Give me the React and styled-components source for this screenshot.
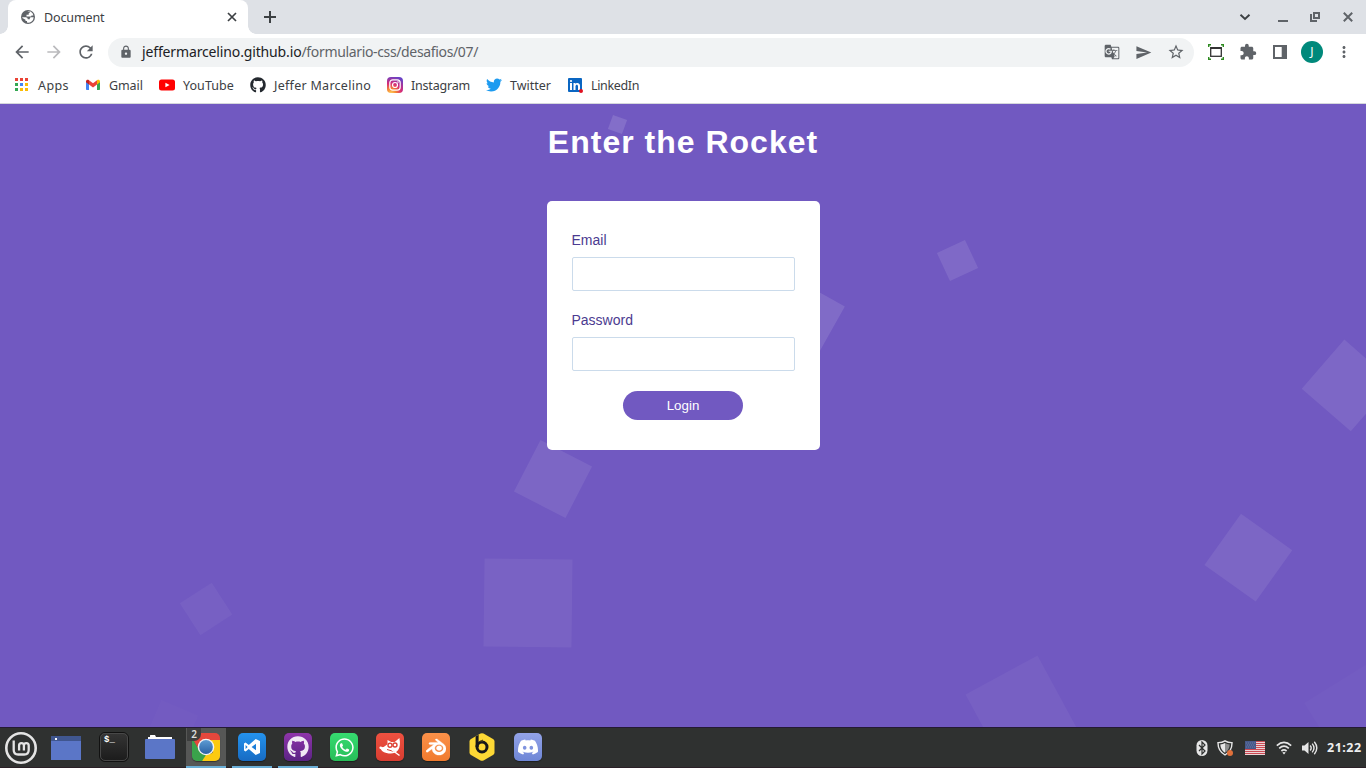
import React from "react";
import styled, { createGlobalStyle } from "styled-components";
import { MdArrowBack, MdArrowForward, MdRefresh, MdLock, MdStarBorder, MdSend, MdExtension, MdMoreVert, MdGTranslate } from "react-icons/md";
import { FaGithub, FaTwitter, FaWhatsapp } from "react-icons/fa";
import { SiBlender, SiDiscord } from "react-icons/si";

const GlobalStyle = createGlobalStyle`
  * { box-sizing: border-box; }
  body { margin: 0; overflow: hidden; background: #7159c1; }
  svg { display: block; flex: none; }
`;

const uiFont = `"Noto Sans", "Open Sans", sans-serif`;

const Desktop = styled.div`
  width: 1366px;
  height: 768px;
  display: flex;
  flex-direction: column;
  overflow: hidden;
  font-family: ${uiFont};
`;

/* Browser chrome */
const TabStrip = styled.header`
  height: 34px;
  flex: none;
  display: flex;
  background: #dee1e6;
  padding-left: 8px;
  color: #3c4043;
`;
const Tab = styled.div`
  width: 240px;
  height: 34px;
  display: flex;
  align-items: center;
  background: #fff;
  border-radius: 8px 8px 0 0;
  padding: 0 9px 0 13px;
  font-size: 12.5px;
  letter-spacing: -0.12px;
  position: relative;
  &::before, &::after {
    content: "";
    position: absolute;
    bottom: 0;
    width: 8px;
    height: 8px;
  }
  &::before { left: -8px; background: radial-gradient(circle at 0 0, transparent 7.5px, #fff 8px); }
  &::after { right: -8px; background: radial-gradient(circle at 100% 0, transparent 7.5px, #fff 8px); }
`;
const TabTitle = styled.span`
  flex: 1;
  padding-left: 9px;
`;
const NewTab = styled.div`
  display: flex;
  align-items: center;
  padding-left: 12px;
`;
const WindowButtons = styled.div`
  margin-left: auto;
  display: flex;
  align-items: center;
  gap: 22px;
  padding-right: 11px;
`;
const Toolbar = styled.div`
  height: 37px;
  flex: none;
  display: flex;
  align-items: center;
  background: #fff;
  color: #5f6368;
  padding: 0 11px 3px 12px;
`;
const NavButtons = styled.div`
  display: flex;
  gap: 12px;
  width: 96px;
  padding-top: 2px;
`;
const Omnibox = styled.div`
  width: 1086px;
  height: 29px;
  margin-top: 3px;
  border-radius: 15px;
  background: #f1f3f4;
  display: flex;
  align-items: center;
  padding: 0 9px 1px 11px;
`;
const Url = styled.span`
  flex: 1;
  padding-left: 9px;
  font-size: 14px;
  letter-spacing: -0.35px;
  line-height: 20px;
  color: #5f6368;
  b { color: #202124; font-weight: 400; letter-spacing: -0.14px; }
`;
const OmniboxActions = styled.div`
  display: flex;
  align-items: center;
  gap: 15px;
`;
const Extensions = styled.div`
  display: flex;
  align-items: center;
  gap: 15px;
  padding: 2px 0 0 14px;
`;
const Avatar = styled.span`
  width: 22px;
  height: 22px;
  margin: 0 -3px 0 -2px;
  border-radius: 50%;
  background: #00897b;
  color: #fff;
  font-size: 12px;
  line-height: 22px;
  text-align: center;
`;
const Bookmarks = styled.nav`
  height: 33px;
  flex: none;
  display: flex;
  background: #fff;
  border-bottom: 1px solid #d5d7db;
  padding: 0 0 4px 13px;
  color: #3c4043;
  font-size: 12.5px;
`;
const Bookmark = styled.span`
  width: ${(p) => p.$width}px;
  display: flex;
  align-items: center;
  gap: 8px;
  white-space: nowrap;
  letter-spacing: ${(p) => p.$spacing || 0}px;
`;

/* Page */
const Page = styled.main`
  flex: 1;
  position: relative;
  overflow: hidden;
  background: #7159c1;
  display: flex;
  flex-direction: column;
  align-items: center;
  font-family: "Liberation Sans", Arial, sans-serif;
`;
const Square = styled.i`
  position: absolute;
  left: ${(p) => p.$x - p.$size / 2}px;
  top: ${(p) => p.$y - p.$size / 2}px;
  width: ${(p) => p.$size}px;
  height: ${(p) => p.$size}px;
  transform: rotate(${(p) => p.$angle}deg);
  background: rgba(255, 255, 255, ${(p) => p.$alpha});
`;
const Title = styled.h1`
  margin: 20px 0 0;
  height: 77px;
  font-size: 32px;
  line-height: 37px;
  letter-spacing: 1px;
  color: #fff;
  z-index: 1;
`;
const Card = styled.form`
  width: 273px;
  height: 249px;
  padding: 30px 25px;
  border-radius: 5px;
  background: #fff;
  display: flex;
  flex-direction: column;
  z-index: 1;
`;
const Field = styled.label`
  display: flex;
  flex-direction: column;
  gap: 8px;
  height: 80px;
  font-size: 14px;
  line-height: 18px;
  color: #4b3b90;
`;
const Input = styled.input`
  height: 34px;
  width: 223px;
  border: 1px solid #cbdbeb;
  border-radius: 2px;
  background: #fff;
  padding: 0 8px;
`;
const LoginButton = styled.button`
  width: 120px;
  height: 29px;
  align-self: center;
  border: 0;
  border-radius: 15px;
  padding: 0;
  background: #7159c1;
  color: #fff;
  font: 13.33px "Liberation Sans", Arial, sans-serif;
`;

/* Desktop panel */
const Panel = styled.footer`
  height: 41px;
  flex: none;
  display: flex;
  background: #2f3130;
  border-top: 1px solid #241a35;
  border-bottom: 1px solid #2b2027;
`;
const MenuButton = styled.div`
  width: 46px;
  padding: 4px 0 0 5px;
`;
const Launcher = styled.div`
  width: 48px;
  padding: 8px 0 0 5px;
`;
const Apps = styled.div`
  display: flex;
  gap: 6px;
`;
const AppSlot = styled.div`
  width: 40px;
  height: 40px;
  display: flex;
  justify-content: center;
  align-items: center;
  position: relative;
  background: ${(p) => (p.$active ? "#565756" : "transparent")};
  border-bottom: 2px solid ${(p) => (p.$open ? "#6aaed6" : "transparent")};
`;
const Tile = styled.span`
  width: 28px;
  height: 28px;
  border-radius: 5px;
  display: flex;
  align-items: center;
  justify-content: center;
  overflow: hidden;
  color: #fff;
  background: ${(p) => p.$bg};
  box-shadow: 0 1px 1px rgba(0, 0, 0, 0.4);
`;
const Count = styled.span`
  position: absolute;
  left: 1px;
  top: 0;
  width: 14px;
  height: 13px;
  border-radius: 0 0 7px 0;
  background: #3d3e3e;
  color: #ddd;
  font-size: 10px;
  font-weight: 600;
  line-height: 13px;
  text-align: center;
`;
const Tray = styled.div`
  margin-left: auto;
  display: flex;
  align-items: center;
  padding-right: 4px;
  color: #e6e6e6;
`;
const TrayItem = styled.span`
  width: ${(p) => p.$width}px;
`;
const Clock = styled.span`
  font-size: 12.5px;
  font-weight: 700;
  color: #eee;
  width: 35px;
  white-space: nowrap;
  letter-spacing: 0.5px;
`;

const squares = [
  [617.5, 20.5, 15, 20, 0.13],
  [957.5, 156.5, 31, -25, 0.1],
  [803.6, 214.3, 60, 29.3, 0.11],
  [1347.8, 281.2, 65.2, 41, 0.085],
  [1248.5, 453.5, 62.6, 35.5, 0.08],
  [1020.6, 607.2, 82, -28.4, 0.045],
  [1373, 614.5, 100, -32, 0.02],
  [552.7, 374.5, 58, 27.3, 0.08],
  [528, 498.5, 88, 0.7, 0.06],
  [205.8, 505, 37.7, -32.8, 0.045],
  [171.6, 622, 40, 23, 0.014],
];

const GlobeIcon = () => (
  <svg width="14" height="14" viewBox="0 0 14 14">
    <circle cx="7" cy="7" r="7" fill="#5f6368" />
    <path d="M1.300 7.200h3.500q2 .1 2 2h2v-1q0-1 1.500-1h2.400A5.700 5.700 0 0 1 6 12.600v-1.500H4.500V9.700L1.400 8zM6.200 1.400h2.500v1q0 .8-1 .8v1.600H5.500v1.600h4q1 0 1-.9h1.900q-.2-2.500-2.900-4-1.800-.8-3.300-.1z" fill="#fff" />
  </svg>
);
const AppsIcon = () => (
  <svg width="17" height="16" viewBox="0 0 17 16">
    {["#ea4335", "#ea4335", "#ea4335", "#34a853", "#4285f4", "#fbbc05", "#34a853", "#fbbc05", "#fbbc05"].map((c, i) => (
      <rect key={i} x={2 + (i % 3) * 5} y={1 + Math.floor(i / 3) * 5} width="3" height="3" fill={c} />
    ))}
  </svg>
);
const GmailIcon = () => (
  <svg width="16" height="16" viewBox="0 0 16 16">
    <path d="M1 4v8.200c0 .5.3.8.8.8H4V6.500z" fill="#4285f4" />
    <path d="M15 4v8.200c0 .5-.3.8-.8.8H12V6.500z" fill="#34a853" />
    <path d="M4 3.200 8 6.300l4-3.100v4.300l-4 3-4-3z" fill="#ea4335" />
    <path d="M1 4.500C1 2.800 2.700 2.200 4 3.200v4.300L1 5.300z" fill="#c5221f" />
    <path d="M15 4.500c0-1.700-1.700-2.300-3-1.300v4.300l3-2.200z" fill="#fbbc04" />
  </svg>
);
const YouTubeIcon = () => (
  <svg width="16" height="16" viewBox="0 0 16 16">
    <rect y="2.500" width="16" height="11" rx="2.500" fill="#f00" />
    <path d="m6.400 5.700 4.200 2.300-4.200 2.300z" fill="#fff" />
  </svg>
);
const InstagramIcon = () => (
  <svg width="16" height="16" viewBox="0 0 16 16">
    <defs>
      <radialGradient id="insta" cx=".25" cy="1.05" r="1.1">
        <stop offset="0" stopColor="#fed85b" />
        <stop offset=".3" stopColor="#f58334" />
        <stop offset=".6" stopColor="#d62a78" />
        <stop offset="1" stopColor="#6a42c5" />
      </radialGradient>
    </defs>
    <rect width="16" height="16" rx="4" fill="url(#insta)" />
    <rect x="2.800" y="2.800" width="10.400" height="10.400" rx="3" fill="none" stroke="#fff" strokeWidth="1.200" />
    <circle cx="8" cy="8" r="2.500" fill="none" stroke="#fff" strokeWidth="1.200" />
    <circle cx="11" cy="5" r=".8" fill="#fff" />
  </svg>
);
const LinkedInIcon = () => (
  <svg width="16" height="16" viewBox="0 0 16 16">
    <rect x="1" y="1" width="14" height="14" rx="1" fill="#0a66c2" />
    <path d="M3 6h2v7H3zM6.500 6h1.900v1c.9-1.700 4.600-1.600 4.600 1.800V13h-2V9.300c0-2.300-2.500-2-2.500 0V13h-2z" fill="#fff" />
    <circle cx="4" cy="4" r="1.100" fill="#fff" />
    <circle cx="14" cy="14" r="2" fill="#e01020" />
  </svg>
);
const CaptureIcon = () => (
  <svg width="16" height="16" viewBox="0 0 16 16">
    <path d="M.7 3V.8H3M13 .8h2.300V3M.7 13v2.200H3M13 15.200h2.300V13" fill="none" stroke="#2e8b20" strokeWidth="1.400" />
    <rect x="2.700" y="3.700" width="10.600" height="8.600" fill="#fff" stroke="#333" strokeWidth="1.300" />
    <path d="M2.500 4h11" stroke="#333" strokeWidth="2" />
  </svg>
);
const SidePanelIcon = () => (
  <svg width="16" height="16" viewBox="0 0 16 16">
    <rect x="1" y="1" width="14" height="14" fill="#5f6368" />
    <rect x="3" y="3" width="6.700" height="10" fill="#fff" />
  </svg>
);
const MintIcon = () => (
  <svg width="32" height="32" viewBox="0 0 32 32" fill="none" stroke="#e4e4e4">
    <circle cx="16" cy="16" r="14.700" strokeWidth="2.600" />
    <path d="M8.700 8.500V18q0 4.500 4.500 4.500h6q4.500 0 4.500-4.500v-4.500a2.400 2.400 0 0 0-4.800 0v5m0-5a2.400 2.400 0 0 0-4.800 0v5" strokeWidth="2.300" />
  </svg>
);
const FolderIcon = () => (
  <svg width="30" height="26" viewBox="0 0 30 26">
    <path d="M3 7V3h2V1.500Q5 1 5.500 1H10l1 2h16v4z" fill="#fff" />
    <path d="M1 5h28q1 0 1 1v18q0 1-1 1H1q-1 0-1-1V6q0-1 1-1z" fill="#5b76c7" />
  </svg>
);
const WindowIcon = () => (
  <svg width="30" height="24" viewBox="0 0 30 24">
    <rect width="30" height="24" fill="#5b76c7" />
    <rect width="30" height="5" fill="#40568f" />
    <rect x="4" y="2" width="2" height="2" fill="#fff" />
  </svg>
);
const TerminalTile = styled.span`
  width: 30px;
  height: 30px;
  border: 1px solid #111;
  outline: 1px solid #484848;
  outline-offset: -2px;
  border-radius: 6px;
  background: linear-gradient(#353535, #1b1b1b);
  color: #fff;
  padding: 1px 0 0 4px;
  font: 700 9px/12px "Liberation Mono", monospace;
`;
const ChromeIcon = () => (
  <svg width="28" height="28" viewBox="0 0 28 28">
    <defs>
      <linearGradient id="lens" x2="0" y2="1">
        <stop offset="0" stopColor="#5d9bd3" />
        <stop offset="1" stopColor="#2a62a4" />
      </linearGradient>
    </defs>
    <path d="M0 0h28v8H14L7 17 0 5z" fill="#e5473c" />
    <path d="M0 5 7 17l9 5-4 6H0z" fill="#3aa24b" />
    <path d="M14 7h14v21H15l6-9z" fill="#fcca10" />
    <path d="m12 22 9-2-5 8h-6z" fill="#fcca10" />
    <path d="m8 21 6 1-4 6H6z" fill="#3aa24b" />
    <circle cx="14" cy="14" r="8.300" fill="#f4f4f4" />
    <circle cx="14" cy="14" r="6.900" fill="url(#lens)" />
  </svg>
);
const CodeIcon = () => (
  <svg width="18" height="18" viewBox="0 0 18 18" fill="#fff">
    <path fillRule="evenodd" d="M12.700 1 17 3v12l-4.300 2-6.900-6.100-3.200 2.500L1 12.500V5.500l1.600-.9 3.200 2.500zM13 5.700 8.600 9l4.400 3.300zM2.600 7v4l2-2z" />
  </svg>
);
const FoxIcon = () => (
  <svg width="28" height="28" viewBox="0 0 28 28">
    <path d="M4 14.200q4.500.2 7.500-3V7l3.800 2h3.400l4.700-4q1.600 8-1.400 12.300Q18 22 10.500 20 5 18.800 4 14.200z" fill="#fff" />
    <g fill="#fff" stroke="#dc4336" strokeWidth="1.400">
      <circle cx="14" cy="12.300" r="2" />
      <circle cx="19" cy="12" r="2" />
    </g>
    <path d="m11 16.500 8 2.300" stroke="#dc4336" strokeWidth="1" />
    <path d="m16 17 7.500 5.500" stroke="#fff" strokeWidth="1.500" />
    <circle cx="4.700" cy="14.700" r="1.300" fill="#fff" />
  </svg>
);
const BeekeeperIcon = () => (
  <svg width="26" height="28" viewBox="0 0 26 28">
    <path d="M11.500.6q1.500-.8 3 0l9.500 5.400q1.500.9 1.500 2.600v10.800q0 1.700-1.500 2.600l-9.500 5.400q-1.500.8-3 0L2 22Q.5 21.100.5 19.400V8.600Q.5 6.900 2 6z" fill="#fdd835" />
    <path d="M6.600 3.400 9.600 1.700V14h-3z" fill="#17171a" />
    <circle cx="13" cy="14" r="5" fill="none" stroke="#17171a" strokeWidth="3" />
    <path d="m9.500 8.500 4.500-2v2z" fill="#55491a" />
  </svg>
);
const BluetoothIcon = () => (
  <svg width="12" height="16" viewBox="0 0 12 16">
    <rect x=".5" width="11" height="16" rx="5.500" fill="#e6e6e6" />
    <path d="m3 5 6 6-3 3V2l3 3-6 6" stroke="#2f3130" strokeWidth="1.200" fill="none" />
  </svg>
);
const ShieldIcon = () => (
  <svg width="17" height="16" viewBox="0 0 17 16">
    <path d="M8 .8Q5 2.700 1 2.600 .8 11 8 15q7.200-4 7-12.400-4 .1-7-1.800z" fill="none" stroke="#e6e6e6" strokeWidth="1.400" />
    <path d="M8 3Q6 4.400 3.300 4.500 3.500 10 8 12.700z" fill="#e6e6e6" />
    <path d="M8 3q2 1.400 4.700 1.500Q12.500 10 8 12.700z" fill="#8c8d8d" />
    <circle cx="13" cy="13" r="3" fill="#e0703a" />
  </svg>
);
const FlagIcon = () => (
  <svg width="20" height="14" viewBox="0 0 20 14">
    <rect width="20" height="14" fill="#efe5e5" />
    {[0, 2, 4, 6, 8, 10, 12].map((y) => (
      <rect key={y} y={y} width="20" height="1.100" fill="#cb4a54" />
    ))}
    <rect width="11" height="8" fill="#46598b" />
    <path d="M1 2h9M2 4h8M1 6h9" stroke="#6878a0" strokeDasharray="1 1" />
  </svg>
);
const WifiIcon = () => (
  <svg width="16" height="14" viewBox="0 0 16 14" fill="none" stroke="#e6e6e6" strokeWidth="1.700">
    <path d="M.8 4.600q7.200-6.400 14.400 0M3.200 7.400q4.800-4.400 9.600 0M5.400 10q2.600-2.200 5.200 0" />
    <path d="m6.300 11.500 1.700 2 1.700-2Q8 10.300 6.300 11.500" fill="#e6e6e6" stroke="none" />
  </svg>
);
const SpeakerIcon = () => (
  <svg width="16" height="14" viewBox="0 0 16 14" fill="none" stroke="#e6e6e6" strokeWidth="1.400">
    <path d="M0 4.500h2.500L6.500 1v12l-4-3.500H0z" fill="#e6e6e6" stroke="none" />
    <path d="M8.200 4.500q2 2.500 0 5M10.200 2.600q3.600 4.400 0 8.800M12.300.8q5 6.200 0 12.400" />
  </svg>
);

export default function App() {
  return (
    <Desktop>
      <GlobalStyle />
      <TabStrip>
        <Tab>
          <GlobeIcon />
          <TabTitle>Document</TabTitle>
          <svg width="14" height="14" viewBox="0 0 14 14" stroke="#3c4043" strokeWidth="1.700">
            <path d="m3 3 8 8m0-8-8 8" />
          </svg>
        </Tab>
        <NewTab>
          <svg width="20" height="20" viewBox="0 0 20 20" stroke="#3c4043" strokeWidth="2">
            <path d="M4 10h12M10 4v12" />
          </svg>
        </NewTab>
        <WindowButtons>
          <svg width="20" height="16" viewBox="0 0 20 16" fill="none" stroke="#3c4043" strokeWidth="1.900"><path d="m5.500 5.700 4.500 4.300 4.500-4.300" /></svg>
          <svg width="10" height="16" viewBox="-1 0 10 16" overflow="visible"><path d="M0 11h10v2H0z" fill="#5f6368" /></svg>
          <svg width="10" height="16" viewBox="-1 0 10 16" overflow="visible" fill="none" stroke="#5f6368" strokeWidth="2"><path d="M4 4h5v5H4z" /><path d="M1 5v7h6" /></svg>
          <svg width="14" height="16" viewBox="0 0 14 16" stroke="#5f6368" strokeWidth="2"><path d="m2.800 3.800 8.400 8.400m0-8.400-8.400 8.400" /></svg>
        </WindowButtons>
      </TabStrip>
      <Toolbar>
        <NavButtons>
          <MdArrowBack size={20} />
          <MdArrowForward size={20} color="#bababd" />
          <MdRefresh size={20} />
        </NavButtons>
        <Omnibox>
          <MdLock size={14} />
          <Url><b>jeffermarcelino.github.io</b>/formulario-css/desafios/07/</Url>
          <OmniboxActions>
            <MdGTranslate size={16} />
            <MdSend size={17} />
            <MdStarBorder size={18} />
          </OmniboxActions>
        </Omnibox>
        <Extensions>
          <CaptureIcon />
          <MdExtension size={18} />
          <SidePanelIcon />
          <Avatar>J</Avatar>
          <MdMoreVert size={18} />
        </Extensions>
      </Toolbar>
      <Bookmarks>
        <Bookmark $width={72} $spacing={0.4}><AppsIcon />Apps</Bookmark>
        <Bookmark $width={74} $spacing={-0.1}><GmailIcon />Gmail</Bookmark>
        <Bookmark $width={91} $spacing={0.05}><YouTubeIcon />YouTube</Bookmark>
        <Bookmark $width={137} $spacing={0.28}><FaGithub size={16} color="#24292f" />Jeffer Marcelino</Bookmark>
        <Bookmark $width={99} $spacing={-0.2}><InstagramIcon />Instagram</Bookmark>
        <Bookmark $width={81}><FaTwitter size={16} color="#1d9bf0" />Twitter</Bookmark>
        <Bookmark $width={90} $spacing={-0.35}><LinkedInIcon />LinkedIn</Bookmark>
      </Bookmarks>
      <Page>
        {squares.map(([x, y, size, angle, alpha]) => (
          <Square key={x} $x={x} $y={y} $size={size} $angle={angle} $alpha={alpha} />
        ))}
        <Title>Enter the Rocket</Title>
        <Card>
          <Field>Email<Input type="email" /></Field>
          <Field>Password<Input type="password" /></Field>
          <LoginButton type="button">Login</LoginButton>
        </Card>
      </Page>
      <Panel>
        <MenuButton><MintIcon /></MenuButton>
        <Launcher><WindowIcon /></Launcher>
        <Apps>
          <AppSlot><TerminalTile>$_</TerminalTile></AppSlot>
          <AppSlot><FolderIcon /></AppSlot>
          <AppSlot $active $open><Tile><ChromeIcon /></Tile><Count>2</Count></AppSlot>
          <AppSlot $open><Tile $bg="linear-gradient(#2493ee, #176bc3)"><CodeIcon /></Tile></AppSlot>
          <AppSlot $open><Tile $bg="linear-gradient(#8e35aa, #5b2384)"><FaGithub size={22} color="#f0e9f4" /></Tile></AppSlot>
          <AppSlot><Tile $bg="linear-gradient(#36db70, #27bd58)"><FaWhatsapp size={21} /></Tile></AppSlot>
          <AppSlot><Tile $bg="linear-gradient(#ee5140, #d83d31)"><FoxIcon /></Tile></AppSlot>
          <AppSlot><Tile $bg="linear-gradient(#fb9149, #f07a2e)"><SiBlender size={20} stroke="#fff" strokeWidth={0.4} /></Tile></AppSlot>
          <AppSlot><BeekeeperIcon /></AppSlot>
          <AppSlot><Tile $bg="linear-gradient(#93a3e8, #6e86d6)"><SiDiscord size={20} /></Tile></AppSlot>
        </Apps>
        <Tray>
          <TrayItem $width={21}><BluetoothIcon /></TrayItem>
          <TrayItem $width={28}><ShieldIcon /></TrayItem>
          <TrayItem $width={31}><FlagIcon /></TrayItem>
          <TrayItem $width={26}><WifiIcon /></TrayItem>
          <TrayItem $width={25}><SpeakerIcon /></TrayItem>
          <Clock>21:22</Clock>
        </Tray>
      </Panel>
    </Desktop>
  );
}
